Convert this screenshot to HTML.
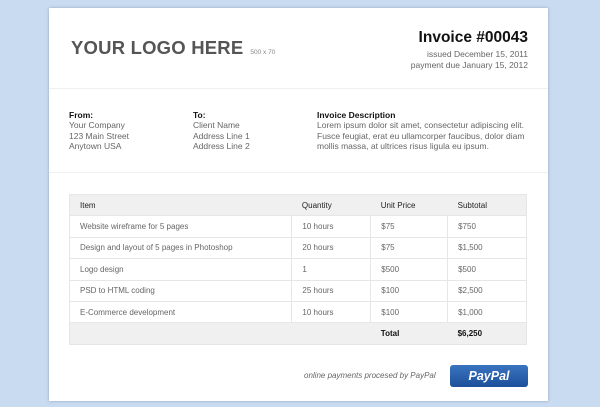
<!DOCTYPE html>
<html><head><style>
*{margin:0;padding:0;box-sizing:border-box}
body{width:600px;height:407px;background:#c8dbf1;font-family:"Liberation Sans",Arial,sans-serif;position:relative;overflow:hidden}
.paper{position:absolute;left:49px;top:8px;width:499px;height:393px;background:#fff;box-shadow:0 0 3px rgba(0,0,0,.25)}
.a{position:absolute}
.logo{left:22px;top:29px;font-size:18.5px;font-weight:bold;color:#555;letter-spacing:.2px}
.logo small{font-size:6.5px;font-weight:normal;color:#888;margin-left:7px;letter-spacing:0}
.inv{right:20px;top:21px;font-size:15.5px;font-weight:bold;color:#111;text-align:right}
.dates{right:20px;top:41px;font-size:8.5px;color:#666;text-align:right;line-height:11px}
.hr{left:0;width:499px;height:1px;background:#f0f0f0}
.blk{top:102px;font-size:8.5px;color:#666;line-height:10.3px}
.blk b{color:#111}
table{position:absolute;left:20px;top:186px;width:458px;border-collapse:collapse;font-size:8px;color:#666}
td{height:21.4px;padding-left:10px;border:1px solid #e6e6e6;border-left:none;border-right:1px solid #e6e6e6}
td:last-child{border-right:none}
tr.h td,tr.t td{background:#f0f0f0;color:#222;border-color:#e6e6e6}
tr.h td{border-right:none}
tr.t td{border-right:none;font-weight:bold;color:#111}
table{border:1px solid #e6e6e6}
.pp{left:255px;top:363px;font-size:8px;font-style:italic;color:#666}
.btn{left:401px;top:357px;width:78px;height:22px;background:linear-gradient(#3a74c0,#1d4f9a);border-radius:3px;color:#fff;font-weight:bold;font-style:italic;font-size:12.5px;text-align:center;line-height:22px}
</style></head><body>
<div class="paper">
<div class="a logo">YOUR LOGO HERE<small>500 x 70</small></div>
<div class="a inv">Invoice #00043</div>
<div class="a dates">issued December 15, 2011<br>payment due January 15, 2012</div>
<div class="a hr" style="top:80px"></div>
<div class="a blk" style="left:20px"><b>From:</b><br>Your Company<br>123 Main Street<br>Anytown USA</div>
<div class="a blk" style="left:144px"><b>To:</b><br>Client Name<br>Address Line 1<br>Address Line 2</div>
<div class="a blk" style="left:268px"><b>Invoice Description</b><br>Lorem ipsum dolor sit amet, consectetur adipiscing elit.<br>Fusce feugiat, erat eu ullamcorper faucibus, dolor diam<br>mollis massa, at ultrices risus ligula eu ipsum.</div>
<div class="a hr" style="top:164px"></div>
<table>
<colgroup><col style="width:223px"><col style="width:79px"><col style="width:77px"><col style="width:79px"></colgroup>
<tr class="h"><td>Item</td><td>Quantity</td><td>Unit Price</td><td>Subtotal</td></tr>
<tr><td>Website wireframe for 5 pages</td><td>10 hours</td><td>$75</td><td>$750</td></tr>
<tr><td>Design and layout of 5 pages in Photoshop</td><td>20 hours</td><td>$75</td><td>$1,500</td></tr>
<tr><td>Logo design</td><td>1</td><td>$500</td><td>$500</td></tr>
<tr><td>PSD to HTML coding</td><td>25 hours</td><td>$100</td><td>$2,500</td></tr>
<tr><td>E-Commerce development</td><td>10 hours</td><td>$100</td><td>$1,000</td></tr>
<tr class="t"><td></td><td></td><td>Total</td><td>$6,250</td></tr>
</table>
<div class="a pp">online payments procesed by PayPal</div>
<div class="a btn">PayPal</div>
</div>
</body></html>
